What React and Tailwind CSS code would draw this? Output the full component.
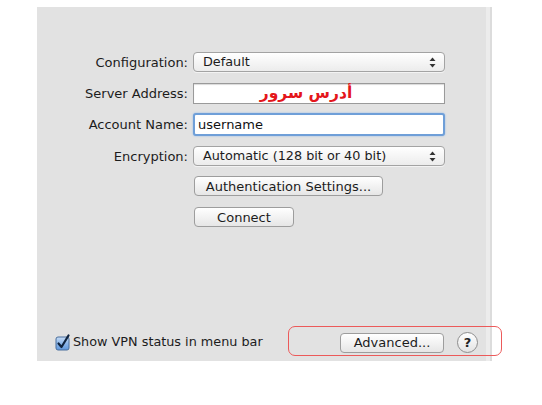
import { useState } from 'react';

const FONT = "font-['DejaVu_Sans',_'Liberation_Sans',_sans-serif]";

const Arrows = () => (
  <svg width="7" height="11" viewBox="0 0 7 11" className="shrink-0">
    <path d="M3.5 0.5 L6.5 4 L0.5 4 Z" fill="#333" />
    <path d="M3.5 10.5 L6.5 7 L0.5 7 Z" fill="#333" />
  </svg>
);

const PopUp = ({ value }) => (
  <div className="flex h-[20px] w-[252px] items-center justify-between rounded-[4px] border border-[#a3a3a3] bg-gradient-to-b from-white to-[#ececec] pl-[9px] pr-[8px] shadow-[0_1px_0_rgba(255,255,255,0.6)]">
    <span className="text-[12.8px] leading-none text-[#1c1c1c]">{value}</span>
    <Arrows />
  </div>
);

const PushButton = ({ children, className = '' }) => (
  <button
    className={`flex h-[20px] items-center justify-center rounded-[4px] border border-[#9d9d9d] bg-gradient-to-b from-white to-[#e6e6e6] text-[13px] leading-none text-[#1c1c1c] ${className}`}
  >
    {children}
  </button>
);

const Row = ({ label, children, className = '' }) => (
  <div className={`flex items-center ${className}`}>
    <span className="w-[151px] shrink-0 text-right text-[13px] leading-none text-[#1c1c1c]">{label}</span>
    <div className="ml-[5px] flex">{children}</div>
  </div>
);

const CheckBox = () => (
  <svg width="16" height="17" viewBox="0 0 16 17" className="shrink-0">
    <defs>
      <linearGradient id="cb" x1="0" y1="0" x2="0" y2="1">
        <stop offset="0" stopColor="#c7dcf5" />
        <stop offset="0.5" stopColor="#8db7ea" />
        <stop offset="1" stopColor="#5f97dc" />
      </linearGradient>
    </defs>
    <rect x="1" y="3" width="13" height="13" rx="2" fill="url(#cb)" stroke="#4a6f9c" strokeWidth="1" />
    <path d="M3.5 9.5 L6.5 13 L13.5 1.5" fill="none" stroke="#10243f" strokeWidth="2.2" strokeLinecap="round" strokeLinejoin="round" />
  </svg>
);

export default function App() {
  const [account, setAccount] = useState('username');

  return (
    <div className={`relative h-[405px] w-[542px] overflow-hidden bg-white ${FONT}`}>
      <div className="ml-[37px] mt-[7px] flex h-[354px] w-[455px]">
        {/* main pane */}
        <div className="flex w-[449px] flex-col bg-[#e2e2e2]">
          <Row label="Configuration:" className="mt-[45px]">
            <PopUp value="Default" />
          </Row>

          <Row label="Server Address:" className="mt-[11px]">
            <div className="relative flex h-[21px] w-[252px] items-center justify-center border border-[#9a9a9a] bg-white shadow-[inset_0_1px_1px_rgba(0,0,0,0.15)]">
              <span
                dir="rtl"
                className="mr-[26px] text-[15.5px] font-bold leading-none text-[#e4161b] font-['DejaVu_Sans',_sans-serif]"
              >
                أدرس سرور
              </span>
            </div>
          </Row>

          <Row label="Account Name:" className="mt-[9px]">
            <div className="flex h-[23px] w-[252px] items-center rounded-[3px] border-[2px] border-[#6f9fd8] bg-white pl-[3px] shadow-[0_0_2px_#8fb8ea]">
              <input
                value={account}
                onChange={(e) => setAccount(e.target.value)}
                className="w-full bg-transparent text-[13px] leading-none text-[#111] outline-none"
              />
            </div>
          </Row>

          <Row label="Encryption:" className="mt-[10px]">
            <PopUp value="Automatic (128 bit or 40 bit)" />
          </Row>

          <div className="ml-[157px] mt-[10px] flex flex-col gap-[11px]">
            <PushButton className="w-[189px]">Authentication Settings...</PushButton>
            <PushButton className="w-[100px]">Connect</PushButton>
          </div>

          <div className="flex-1" />

          {/* bottom bar */}
          <div className="mb-[8px] flex items-center">
            <div className="ml-[18px] flex items-center gap-[2px]">
              <CheckBox />
              <span className="text-[12.8px] leading-none text-[#1c1c1c]">Show VPN status in menu bar</span>
            </div>
            <div className="ml-auto mr-[8px] flex items-center gap-[13px]">
              <PushButton className="w-[104px]">Advanced...</PushButton>
              <div className="flex h-[21px] w-[21px] items-center justify-center rounded-full border border-[#8e8e8e] bg-gradient-to-b from-white to-[#e3e3e3] text-[13px] font-bold leading-none text-[#222]">
                ?
              </div>
            </div>
          </div>
        </div>
        {/* window edge */}
        <div className="w-[4px] bg-[#ececec]" />
        <div className="w-[2px] bg-[#dcdcdc]" />
      </div>

      {/* annotation */}
      <div className="pointer-events-none absolute left-[288px] top-[326px] h-[30px] w-[214px] rounded-[7px] border border-[#ec5a5a]" />
    </div>
  );
}
